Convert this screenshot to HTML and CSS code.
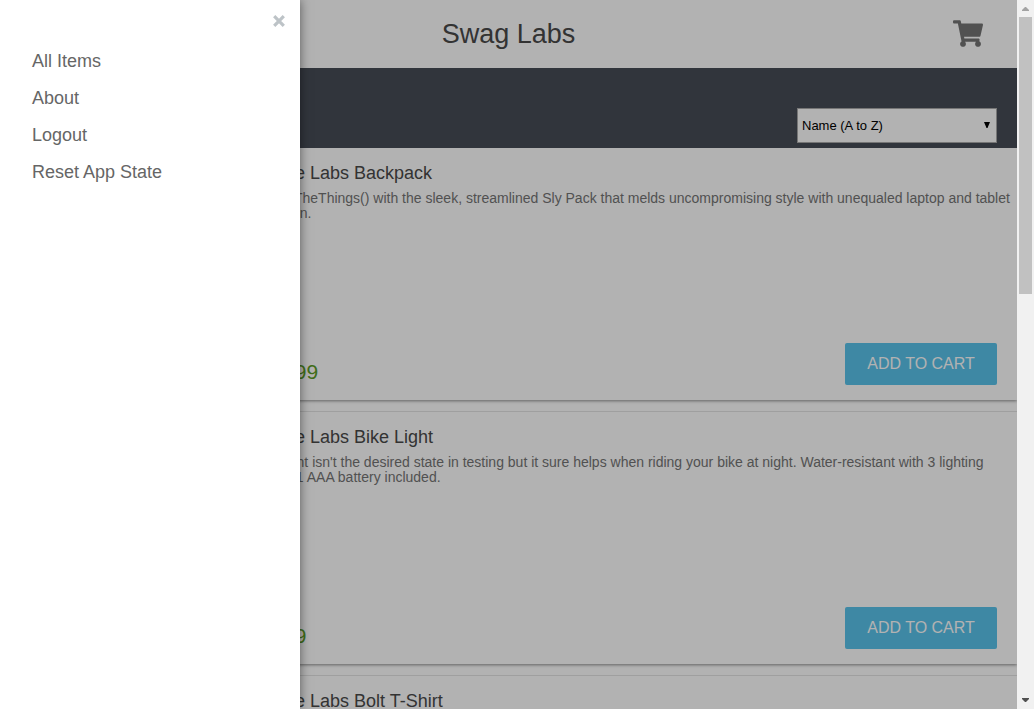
FILE: index.html
```html
<!DOCTYPE html>
<html lang="en">
<head>
<meta charset="utf-8">
<title>Swag Labs</title>
<link rel="stylesheet" href="styles.css">
</head>
<body>
<div class="window">
  <div class="page">
    <header class="header">
      <h1 class="logo">Swag Labs</h1>
      <a class="cart" href="#cart" aria-label="Shopping cart">
        <svg class="cart-icon" viewBox="0 0 576 512" aria-hidden="true"><path fill="currentColor" d="M528.12 301.319l47.273-208C578.806 78.301 567.391 64 551.99 64H159.208l-9.166-44.81C147.758 8.021 137.93 0 126.529 0H24C10.745 0 0 10.745 0 24v16c0 13.255 10.745 24 24 24h69.883l70.248 343.435C147.325 417.1 136 435.222 136 456c0 30.928 25.072 56 56 56s56-25.072 56-56c0-15.674-6.447-29.835-16.824-40h209.647C430.447 426.165 424 440.326 424 456c0 30.928 25.072 56 56 56s56-25.072 56-56c0-22.172-12.888-41.332-31.579-50.405l5.517-24.276c3.413-15.018-8.002-29.319-23.403-29.319H218.117l-6.545-32h293.145c11.206 0 20.92-7.754 23.403-18.681z"/></svg>
      </a>
    </header>
    <div class="toolbar">
      <div class="sort">
        <select class="sort-select" aria-label="Sort products">
          <option>Name (A to Z)</option>
          <option>Name (Z to A)</option>
          <option>Price (low to high)</option>
          <option>Price (high to low)</option>
        </select>
        <svg class="sort-arrow" viewBox="0 0 6 6" aria-hidden="true"><path d="M0 0h6L3.500 6h-1z"/></svg>
      </div>
    </div>
    <main class="list">
      <article class="item">
        <h2 class="item-name">Sauce Labs Backpack</h2>
        <p class="item-desc">carry.allTheThings() with the sleek, streamlined Sly Pack that melds uncompromising style with unequaled laptop and tablet protection.</p>
        <div class="item-foot">
          <span class="price">$29.99</span>
          <button class="add" type="button">ADD TO CART</button>
        </div>
      </article>
      <article class="item">
        <h2 class="item-name">Sauce Labs Bike Light</h2>
        <p class="item-desc">A red light isn't the desired state in testing but it sure helps when riding your bike at night. Water-resistant with 3 lighting modes, 1 AAA battery included.</p>
        <div class="item-foot">
          <span class="price">$9.99</span>
          <button class="add" type="button">ADD TO CART</button>
        </div>
      </article>
      <article class="item">
        <h2 class="item-name">Sauce Labs Bolt T-Shirt</h2>
      </article>
    </main>
    <div class="overlay"></div>
  </div>
  <div class="scrollbar" aria-hidden="true">
    <svg class="scroll-arrow" viewBox="0 0 17 17"><path fill="#a3a3a3" d="M5 11h7v-1L9 7H8L5 10z"/></svg>
    <div class="thumb"></div>
    <svg class="scroll-arrow scroll-down" viewBox="0 0 17 17"><path fill="#505050" d="M5 6h7v1L9 10H8L5 7z"/></svg>
  </div>
  <aside class="menu">
    <button class="close" type="button" aria-label="Close menu">
      <svg class="close-icon" viewBox="0 0 12 12" aria-hidden="true"><path d="M1.200 1.200l9.600 9.600M10.800 1.200l-9.600 9.600" fill="none" stroke="#bdc3c7" stroke-width="3.200"/></svg>
    </button>
    <nav class="menu-nav">
      <a class="menu-link" href="#items">All Items</a>
      <a class="menu-link" href="#about">About</a>
      <a class="menu-link" href="#logout">Logout</a>
      <a class="menu-link" href="#reset">Reset App State</a>
    </nav>
  </aside>
</div>
</body>
</html>
```
FILE: styles.css
```css
* {
  box-sizing: border-box;
}

body {
  margin: 0;
  font-family: "Liberation Sans", Arial, sans-serif;
  color: #474c55;
  background: #fff;
}

.window {
  position: relative;
  display: grid;
  grid-template-columns: minmax(0, 1fr) 17px;
  height: 100vh;
  overflow: hidden;
}

.page {
  position: relative;
  min-height: 0;
  overflow: hidden;
}

.overlay {
  position: absolute;
  inset: 0;
  background: rgba(0, 0, 0, 0.3);
}

.header {
  display: grid;
  grid-template-columns: 1fr auto 1fr;
  align-items: center;
  height: 68px;
  padding: 0 34px;
}

.logo {
  grid-column: 2;
  margin: 0;
  font-size: 27px;
  font-weight: 400;
  line-height: 32px;
  color: #4a4a4a;
}

.cart {
  justify-self: end;
  padding-bottom: 2px;
  color: #757575;
}

.cart-icon {
  display: block;
  width: 30px;
  height: 27px;
}

.toolbar {
  display: flex;
  justify-content: flex-end;
  align-items: flex-end;
  height: 80px;
  padding: 5px 20px;
  background: #474c57;
}

.sort {
  position: relative;
}

.sort-select {
  display: block;
  width: 200px;
  height: 35px;
  padding: 0 4px;
  border: 1px solid #a9a9a9;
  border-radius: 0;
  appearance: none;
  background: #fff;
  color: #000;
  font: 13px "Liberation Sans", Arial, sans-serif;
}

.sort-arrow {
  position: absolute;
  top: 14px;
  right: 7px;
  width: 6px;
  height: 6px;
}

.item {
  display: flex;
  flex-direction: column;
  min-height: 253px;
  margin-bottom: 11px;
  padding: 15px 20px 15px 254px;
  border-top: 1px solid #e4e4e4;
  box-shadow: 0 1px 3px rgba(0, 0, 0, 0.45);
  clip-path: inset(0 0 -6px 0);
}

.item:first-child {
  min-height: 252px;
  border-top: 0;
}

.item-name {
  margin: 0 0 8px;
  font-size: 18px;
  font-weight: 400;
  line-height: 20px;
  color: #4a4a4a;
}

.item-desc {
  margin: 0 -18px 0 -8px;
  font-size: 14px;
  line-height: 15px;
  color: #757575;
}

.item-foot {
  display: flex;
  justify-content: space-between;
  align-items: flex-end;
  margin-top: auto;
}

.price {
  font-size: 21px;
  line-height: 26px;
  color: #5c9c26;
}

.add {
  width: 152px;
  height: 42px;
  padding: 0;
  border: 0;
  border-radius: 2px;
  background: #59c3eb;
  color: #fff;
  font: 16px "Liberation Sans", Arial, sans-serif;
}

.scrollbar {
  display: flex;
  flex-direction: column;
  background: #f1f1f1;
}

.scroll-arrow {
  display: block;
  flex: none;
  width: 17px;
  height: 17px;
}

.scroll-down {
  margin-top: auto;
}

.thumb {
  height: 39%;
  margin: 0 2px;
  background: #c1c1c1;
}

.menu {
  position: absolute;
  top: 0;
  bottom: 0;
  left: 0;
  width: 300px;
  background: #fff;
  box-shadow: 0 0 10px rgba(0, 0, 0, 0.5);
}

.close {
  position: absolute;
  top: 8px;
  right: 8px;
  display: grid;
  place-items: center;
  width: 26px;
  height: 26px;
  padding: 0;
  border: 0;
  background: none;
}

.close-icon {
  width: 12px;
  height: 12px;
}

.menu-nav {
  display: flex;
  flex-direction: column;
  gap: 16px;
  padding: 51px 32px;
}

.menu-link {
  font-size: 18px;
  line-height: 21px;
  color: #666;
  text-decoration: none;
}
```
